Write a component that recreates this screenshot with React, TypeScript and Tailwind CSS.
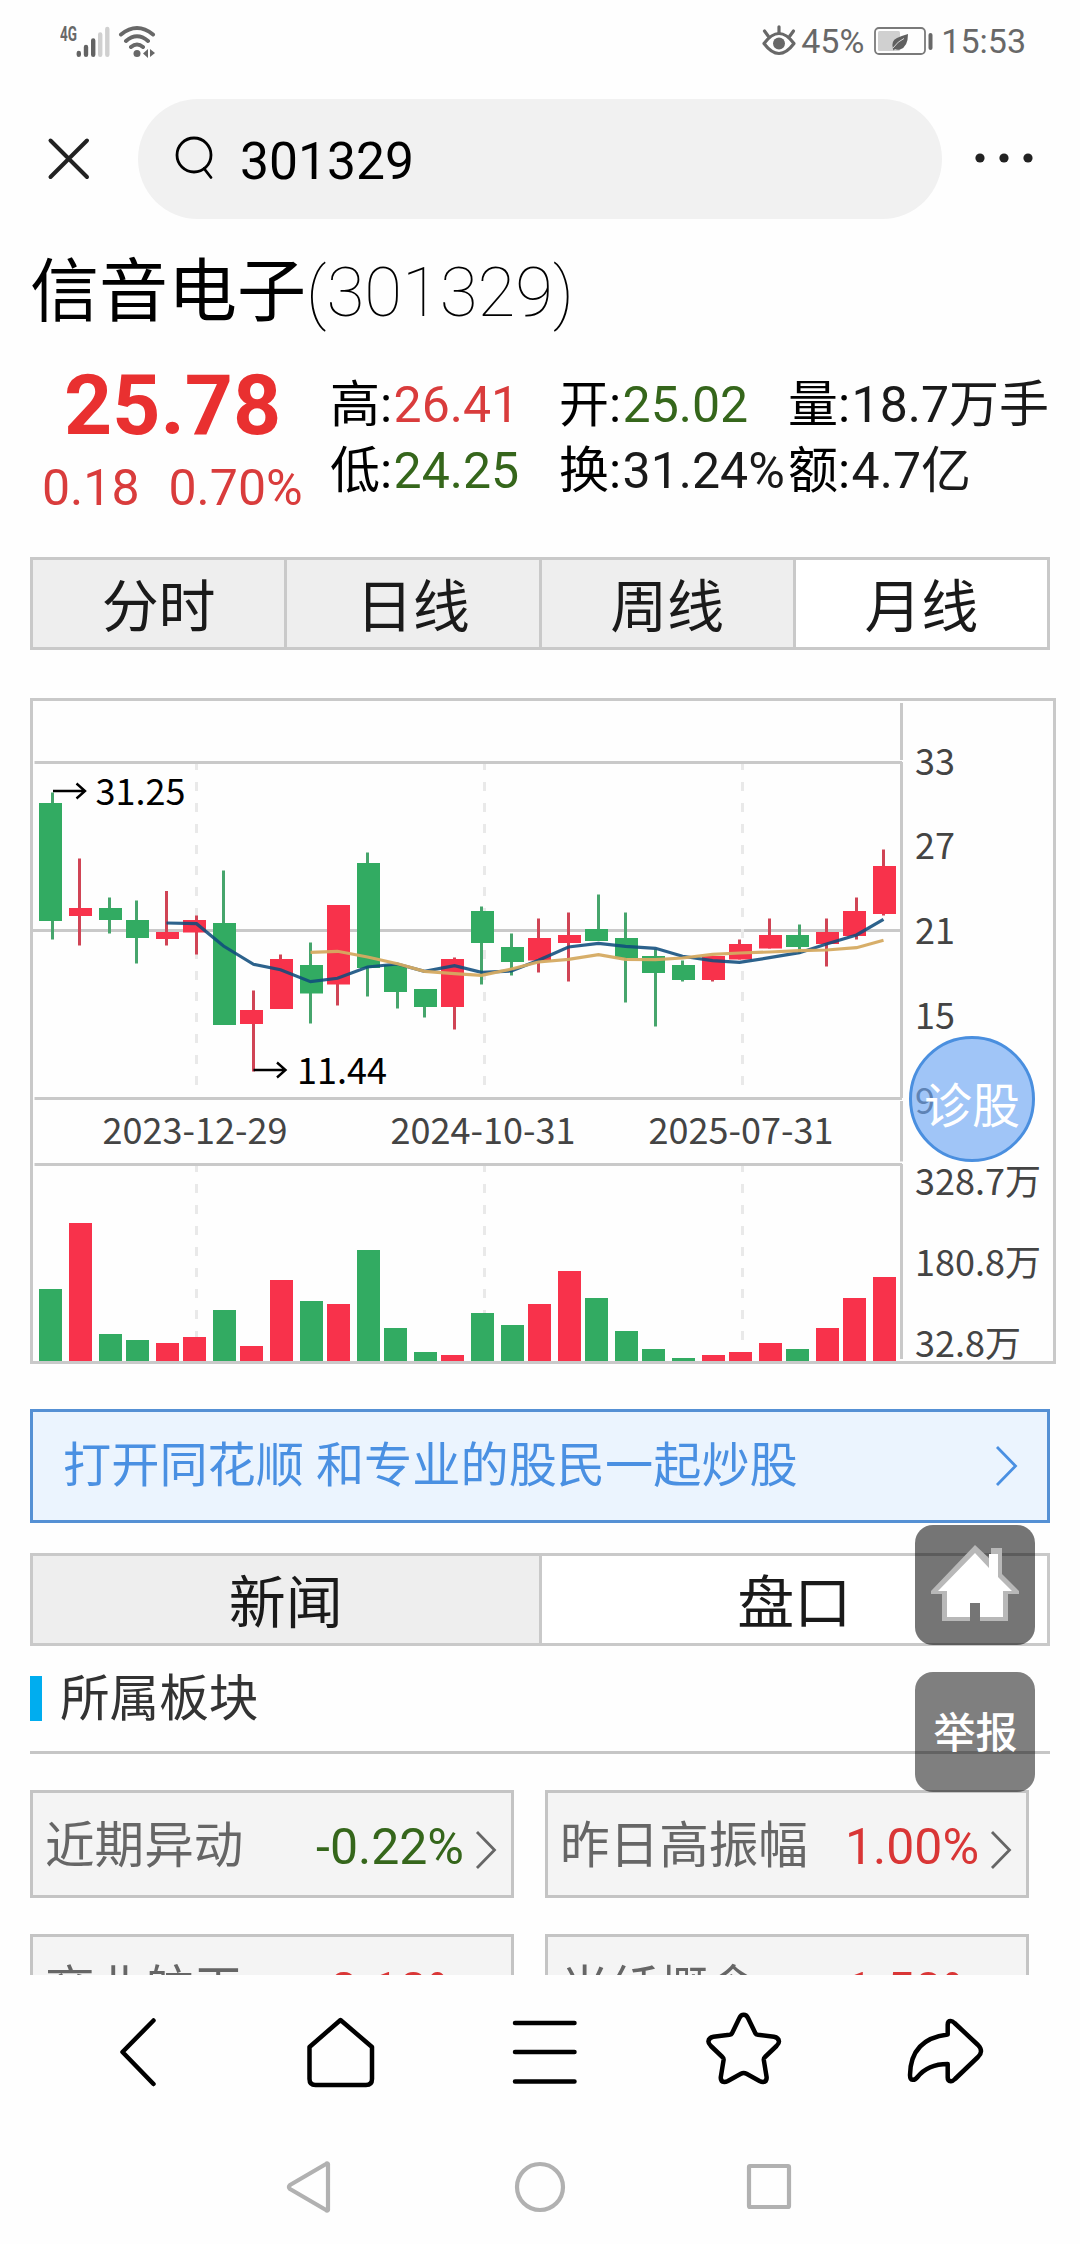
import { clsx } from 'clsx';

type Candle = {
  x: number;
  wickX: number;
  top: number;
  bottom: number;
  high: number;
  low: number;
  volume: number;
  up: boolean;
};

// x, wickX, body top, body bottom, high, low, volume, up
const RAW_CANDLES: [number, number, number, number, number, number, number, number][] = [
  [6, 18, 102, 220, 91.5, 238.5, 72, 0],
  [36, 45, 207, 215, 157.5, 244.5, 138, 1],
  [66, 75, 207, 219, 196.5, 232.5, 27, 0],
  [93, 102, 219, 237, 199.5, 262.5, 21, 0],
  [123, 132, 231, 238, 190, 244.5, 18, 1],
  [150, 162, 219, 231.5, 214.5, 253.5, 24, 1],
  [180, 189, 222, 324, 169.5, 324, 51, 0],
  [207, 219, 309, 323, 289.5, 370.5, 15, 1],
  [237, 246, 258, 308, 253.5, 308, 81, 1],
  [267, 276, 264, 292.5, 241.5, 322.5, 60, 0],
  [294, 303, 204, 283.5, 204, 304.5, 57, 1],
  [324, 333, 162, 267, 151.5, 295.5, 111, 0],
  [351, 363, 264, 291, 264, 307.5, 33, 0],
  [381, 390, 288, 306, 288, 316.5, 9, 0],
  [408, 420, 258, 306, 256.5, 328.5, 6, 1],
  [438, 447, 210, 242, 205.5, 283.5, 48, 0],
  [468, 477, 246, 261, 232.5, 274.5, 36, 0],
  [495, 504, 237, 259.5, 217.5, 271.5, 57, 1],
  [525, 534, 234, 242, 211.5, 280.5, 90, 1],
  [552, 564, 228, 240, 193.5, 240, 63, 0],
  [582, 591, 237, 257, 211.5, 301.5, 30, 0],
  [609, 621, 255, 272, 248.5, 325.5, 12, 0],
  [639, 648, 264, 279, 259.5, 280.5, 3, 0],
  [669, 678, 255, 279, 255, 280.5, 6, 1],
  [696, 705, 243, 258.5, 238.5, 258.5, 9, 1],
  [726, 735, 234, 247.5, 217.5, 247.5, 18, 1],
  [753, 765, 234, 246, 223.5, 252.5, 12, 0],
  [783, 792, 231, 243, 217.5, 265.5, 33, 1],
  [810, 822, 210, 235, 196.5, 238.5, 63, 1],
  [840, 849, 165, 213, 148.5, 214.5, 84, 1],
];

const candles: Candle[] = RAW_CANDLES.map(([x, wickX, top, bottom, high, low, volume, up]) => ({
  x,
  wickX,
  top,
  bottom,
  high,
  low,
  volume,
  up: up === 1,
}));

const MA5 = [
  222, 222.7, 245, 263.3, 268.7, 280.7, 277.3, 266, 263, 270.3, 264.7, 271.3, 270, 259.3, 246, 242.3, 245.3, 247.3,
  255.3, 259.7, 261.3, 256.7, 251.7, 243, 234, 218.3,
];

const MA10 = [
  251.3, 250.3, 256, 262.7, 270.3, 272.7, 274.3, 268, 261, 258.3, 253.7, 258.3, 258.7, 257, 253.3, 252, 251, 249.7,
  249, 246.7, 239.3,
];

const priceLabels = [
  { text: '33', y: 74 },
  { text: '27', y: 158 },
  { text: '21', y: 243 },
  { text: '15', y: 328 },
  { text: '9', y: 413 },
];

const volumeLabels = [
  { text: '328.7万', y: 494 },
  { text: '180.8万', y: 575 },
  { text: '32.8万', y: 656 },
];

const dates = [
  { text: '2023-12-29', x: 163.5 },
  { text: '2024-10-31', x: 451.5 },
  { text: '2025-07-31', x: 709.5 },
];

// Moving averages end at the last candle
const maPoints = (values: number[]) =>
  values.map((y, i) => `${candles[candles.length - values.length + i].wickX + 1.5},${y}`).join(' ');

function StatusBar() {
  return (
    <div className="flex h-[82px] items-center justify-between pr-[54px] pl-[60px] text-[34px] leading-none text-[#686868]">
      <svg width="97" height="34" viewBox="0 0 97 34">
        <text
          x="0"
          y="17"
          textLength="17"
          lengthAdjust="spacingAndGlyphs"
          className="fill-[#686868] font-['Roboto'] text-[20px] font-bold"
        >
          4G
        </text>
        <g strokeWidth="4.4" strokeLinecap="round">
          <path d="M18.8 29v1.8M26 23v7.8M33.2 16.5v14.3" stroke="#636363" />
          <path d="M40.2 10.5v20.3M47.3 5v25.8" stroke="#d0d0d0" />
        </g>
        <g fill="none" stroke="#686868" strokeWidth="4" strokeLinecap="round">
          <path d="M61 10.5q16-13 32 0M66 17q11-9.500 22 0M71 23q6-5 12 0" />
        </g>
        <circle cx="77" cy="29.5" r="3.5" fill="#686868" />
        <path d="M83 29.500l5-4.500v9zM90 25v8l5-4z" fill="#686868" />
      </svg>
      <div className="flex items-center">
        <svg width="34" height="32" viewBox="0 0 34 32" fill="none" stroke="#686868" strokeWidth="3.2">
          <path d="M2 18.500q15-20 30 0q-15 20-30 0z" strokeLinejoin="round" />
          <circle cx="17" cy="18.5" r="6" fill="#686868" stroke="none" />
          <path d="M2.500 6l4 5.500M17 1.800v6M31.500 6l-4 5.500" strokeLinecap="round" />
        </svg>
        <span className="ml-[5px]">45%</span>
        <svg className="ml-[9px]" width="60" height="30" viewBox="0 0 60 30">
          <rect x="2" y="2" width="50" height="26" rx="4" fill="none" stroke="#7a7a7a" strokeWidth="1.8" />
          <rect x="5" y="5" width="22" height="20" rx="1.5" fill="#d0d0d0" />
          <path d="M20 23q-2.500-8 4-11q4-2 11-4q0 13-8 15.500q-3 .8-5-.5l-1.500 1.500z" fill="#606060" />
          <path d="M20 22q5-7 11-9.500" fill="none" stroke="#d8d8d8" strokeWidth="1" />
          <rect x="55.5" y="7" width="4" height="17" rx="2" fill="#686868" />
        </svg>
        <span className="ml-[8px]">15:53</span>
      </div>
    </div>
  );
}

function SearchBar() {
  return (
    <div className="flex h-[154px] items-center pl-[46px]">
      <svg width="46" height="46" viewBox="0 0 46 46" stroke="#222" strokeWidth="4" strokeLinecap="round">
        <path d="M4.500 4.500l36.500 36.500M41 4.500L4.500 41" />
      </svg>
      <div className="ml-[46px] flex h-[120px] w-[804px] items-center rounded-full bg-[#f1f1f1] pl-[36px]">
        <svg width="44" height="48" viewBox="0 0 44 48" fill="none" stroke="#000" strokeWidth="2.8">
          <circle cx="20" cy="20" r="17" />
          <path d="M30 33.500l7 9" strokeLinecap="round" />
        </svg>
        <span className="ml-[22px] pt-[5px] text-[51.6px] leading-none text-black">301329</span>
      </div>
      <svg className="ml-[32px]" width="60" height="12" viewBox="0 0 60 12" fill="#222">
        <circle cx="6" cy="5" r="4.6" />
        <circle cx="30" cy="5" r="4.6" />
        <circle cx="54" cy="5" r="4.6" />
      </svg>
    </div>
  );
}

function QuoteItem({ label, value, color = 'text-[#1a1a1a]' }: { label: string; value: string; color?: string }) {
  return (
    <div className="flex w-[229px] whitespace-nowrap">
      <span className="mr-[1.5px] text-black">{label}:</span>
      <span className={color}>{value}</span>
    </div>
  );
}

function Quote() {
  return (
    <div className="flex h-[211px] pt-[25px]">
      <div className="flex w-[300px] flex-col">
        <div className="pl-[34px] text-[84px] leading-[70px] font-bold text-[#e93030]">25.78</div>
        <div className="flex gap-[29px] pt-[19px] pl-[12px] text-[50px] leading-[56px] text-[#d93c3c]">
          <span>0.18</span>
          <span>0.70%</span>
        </div>
      </div>
      <div className="pt-[1px] text-[50px] leading-[66px]">
        <div className="flex">
          <QuoteItem label="高" value="26.41" color="text-[#d93c3c]" />
          <QuoteItem label="开" value="25.02" color="text-[#35661b]" />
          <QuoteItem label="量" value="18.7万手" />
        </div>
        <div className="flex">
          <QuoteItem label="低" value="24.25" color="text-[#35661b]" />
          <QuoteItem label="换" value="31.24%" />
          <QuoteItem label="额" value="4.7亿" />
        </div>
      </div>
    </div>
  );
}

function Tabs({ items, active }: { items: string[]; active: string }) {
  return (
    <div className="flex h-[93px] w-[1020px] border-[3px] border-[#c9c9c9] text-[57px] leading-[82px] text-[#1a1a1a]">
      {items.map((item, i) => (
        <div
          key={item}
          className={clsx(
            'flex-1 pt-[7px] text-center',
            i > 0 && 'border-l-[3px] border-[#c9c9c9]',
            item === active ? 'bg-white' : 'bg-[#eee]'
          )}
        >
          {item}
        </div>
      ))}
    </div>
  );
}

function Arrow({ x, y }: { x: number; y: number }) {
  return (
    <path
      d={`M${x} ${y}h32M${x + 23.5} ${y - 7.5}l8.500 7.500l-8.500 7.500`}
      fill="none"
      stroke="#000"
      strokeWidth="2.4"
    />
  );
}

function Chart() {
  return (
    <div className="relative mt-12 h-[666px] w-[1026px] border-[3px] border-[#c9c9c9]">
      <svg width="1020" height="660" viewBox="0 0 1020 660" className="font-['Noto_Sans_CJK_SC',sans-serif] text-[36px]">
        {/* Grid */}
        <g stroke="#c9c9c9" strokeWidth="3" fill="none">
          <path d="M0 229.500H868M1.500 397.500H869" />
          <path d="M868.500 2v57M868.500 61v336M868.500 400v60.500M868.500 463v195" />
        </g>
        <g stroke="#e9e9e9" strokeWidth="3" strokeDasharray="9 12">
          {dates.map((d) => (
            <path key={d.text} d={`M${d.x} 60V384M${d.x} 462V640`} />
          ))}
        </g>
        <path d="M1.500 61.500H869M1.500 463.500H869" stroke="#c9c9c9" strokeWidth="3" />

        {/* Candles and volume */}
        {candles.map((c) => (
          <g key={c.x}>
            <rect x={c.wickX} y={c.high} width="3" height={c.low - c.high} fill={c.up ? '#d04455' : '#46a56c'} />
            <rect x={c.x} y={c.top} width="23" height={c.bottom - c.top} fill={c.up ? '#f8324b' : '#32ab62'} />
            <rect x={c.x} y={660 - c.volume} width="23" height={c.volume} fill={c.up ? '#f8324b' : '#32ab62'} />
          </g>
        ))}

        {/* Moving averages */}
        <g fill="none" strokeWidth="3.2">
          <polyline points={maPoints(MA5)} stroke="#0f4c7c" strokeOpacity="0.88" />
          <polyline points={maPoints(MA10)} stroke="#d5aa61" strokeOpacity="0.95" />
        </g>

        <Arrow x={20} y={90} />
        <text x="62.5" y="104">31.25</text>
        <Arrow x={220.5} y={369} />
        <text x="264" y="383">11.44</text>

        <g fill="#444">
          {dates.map((d) => (
            <text key={d.text} x={d.x - 1.5} y="443" textAnchor="middle">
              {d.text}
            </text>
          ))}
          {[...priceLabels, ...volumeLabels].map((l) => (
            <text key={l.text} x="882" y={l.y}>
              {l.text}
            </text>
          ))}
        </g>
      </svg>
      <button className="absolute top-[335px] left-[876px] flex size-[126px] items-center justify-center rounded-full border-[3px] border-[#4a8fdf] bg-[#6da6f3]/65 pt-[15px] text-[48px] leading-none text-white">
        诊股
      </button>
    </div>
  );
}

function OpenAppBanner() {
  return (
    <div className="mt-[45px] flex h-[114px] w-[1020px] items-center justify-between border-[3px] border-[#5590d4] bg-[#ebf4fe] pr-[28px] pl-[30px] text-[48.2px] leading-none text-[#4a90e2]">
      <span>打开同花顺 和专业的股民一起炒股</span>
      <svg width="24" height="44" viewBox="0 0 24 44" fill="none" stroke="#4a90e2" strokeWidth="2.8">
        <path d="M2 3l18.500 19L2 41" />
      </svg>
    </div>
  );
}

function BoardTile({ name, change }: { name: string; change: string }) {
  return (
    <div className="flex h-[108px] w-[484px] items-center border-[3px] border-[#c4c4c4] bg-[#f4f4f4] pt-[6px] pl-[12px] text-[50px] leading-none text-[#666]">
      <span className="text-[49.6px]">{name}</span>
      <span className={clsx('ml-auto', change.startsWith('-') ? 'text-[#35661b]' : 'text-[#d93636]')}>{change}</span>
      <svg className="mt-[6px] mr-[12px] ml-[11px]" width="24" height="42" viewBox="0 0 24 42" fill="none" stroke="#666" strokeWidth="2.8">
        <path d="M2 3l17.500 18L2 39" />
      </svg>
    </div>
  );
}

function Boards() {
  return (
    <div>
      <div className="flex h-[108px] w-[1020px] items-center border-b-[3px] border-[#c6c6c6] text-[50px] leading-none text-[#333]">
        <div className="h-[45px] w-3 bg-[#00adef]" />
        <span className="ml-[18px] pt-[3px] text-[49.6px]">所属板块</span>
      </div>
      <div className="flex w-[1020px] flex-wrap gap-x-[31px] gap-y-9 pt-9">
        <BoardTile name="近期异动" change="-0.22%" />
        <BoardTile name="昨日高振幅" change="1.00%" />
        <BoardTile name="商业航天" change="2.18%" />
        <BoardTile name="光纤概念" change="1.50%" />
      </div>
    </div>
  );
}

function FloatingButtons() {
  return (
    <div className="absolute top-[1289px] left-[915px] flex flex-col gap-[27px]">
      <button className="flex size-[120px] items-center justify-center rounded-[18px] bg-black/54 pb-[4px]">
        <svg width="90" height="78" viewBox="0 0 90 78">
          <path d="M45 1L1 47v3h11v27h28V59h10v18h28V50h11v-3L72 30V4H61v12z" fill="#b8b8b8" />
          <path d="M45 9L8 47h9v26h23V59h10v14h23V47h9L68 33V10h-9v14z" fill="#fff" />
        </svg>
      </button>
      <button className="flex size-[120px] items-center justify-center rounded-[18px] bg-black/50 pt-[2px] pl-[1px] text-[42px] font-medium text-white">
        举报
      </button>
    </div>
  );
}

function BottomNav() {
  return (
    <div className="flex h-[154px] items-center">
      <svg width="1080" height="154" viewBox="0 0 1080 154" fill="none" stroke="#000" strokeWidth="4.5" strokeLinecap="round" strokeLinejoin="round">
        <path d="M153.500 45.500L122.500 77L153.500 109" />
        <path d="M309.500 72L340.500 45L372 72V104q0 6-6 6H315.500q-6 0-6-6z" />
        <path d="M515 48h59.500M515 77h59.500M515 106.500h59.500" />
        <path d="M743.700 39.800Q746.500 39.800 748 43L755.500 58.500Q756 59.500 758 59.800L774 61.800Q778.500 62.500 779 66.500Q779 68.500 776.500 71L765 82Q763.600 83.200 763.800 85L766.600 102Q767 106.500 763 107Q761.500 107 759.500 106L746.500 98.800Q743.700 97.300 740.900 98.800L727.900 106Q725.900 107 724.400 107Q720.400 106.500 720.800 102L723.600 85Q723.800 83.200 722.400 82L710.900 71Q708.400 68.500 708.400 66.500Q708.900 62.500 713.400 61.800L729.400 59.800Q731.400 59.500 731.900 58.500L739.400 43Q740.900 39.800 743.700 39.800z" />
        <path d="M947.700 49.500Q947.700 46 950.700 46Q952.500 46 954.500 48L978 70Q981 73 981 76.200Q981 79 978 82L955 104Q952.500 106.500 950.700 106.200Q947.700 106 947.700 102.500V89Q928 89 917.500 102Q915 105.200 912.500 104.800Q910 104.500 910 100Q910.500 64 947.700 59.500z" />
      </svg>
    </div>
  );
}

function SystemNav() {
  return (
    <div className="flex h-[115px]">
      <svg width="1080" height="115" viewBox="0 0 1080 115" fill="none" stroke="#b1b1b1" strokeWidth="4.2" strokeLinejoin="round">
        <path d="M328 35v46q-1 1-2 0L290 60q-2-2 0-4L326 35q1-1 2 0z" />
        <circle cx="540" cy="58" r="23" />
        <rect x="749" y="37" width="40" height="41" rx="1" />
      </svg>
    </div>
  );
}

function App() {
  return (
    <div className="flex h-[2244px] w-[1080px] flex-col overflow-hidden bg-[#fefefe] font-['Roboto','Noto_Sans_CJK_SC',sans-serif]">
      <StatusBar />
      <SearchBar />
      <main className="relative h-[1739px] overflow-hidden pl-[30px]">
        <h1 className="h-[110px] pt-[2px] text-[69px] leading-[110px] text-black">
          信音电子<span className="font-thin">(301329)</span>
        </h1>
        <Quote />
        <Tabs items={['分时', '日线', '周线', '月线']} active="月线" />
        <Chart />
        <OpenAppBanner />
        <div className="mt-[30px]">
          <Tabs items={['新闻', '盘口']} active="盘口" />
        </div>
        <Boards />
        <FloatingButtons />
      </main>
      <BottomNav />
      <SystemNav />
    </div>
  );
}

export default App;
